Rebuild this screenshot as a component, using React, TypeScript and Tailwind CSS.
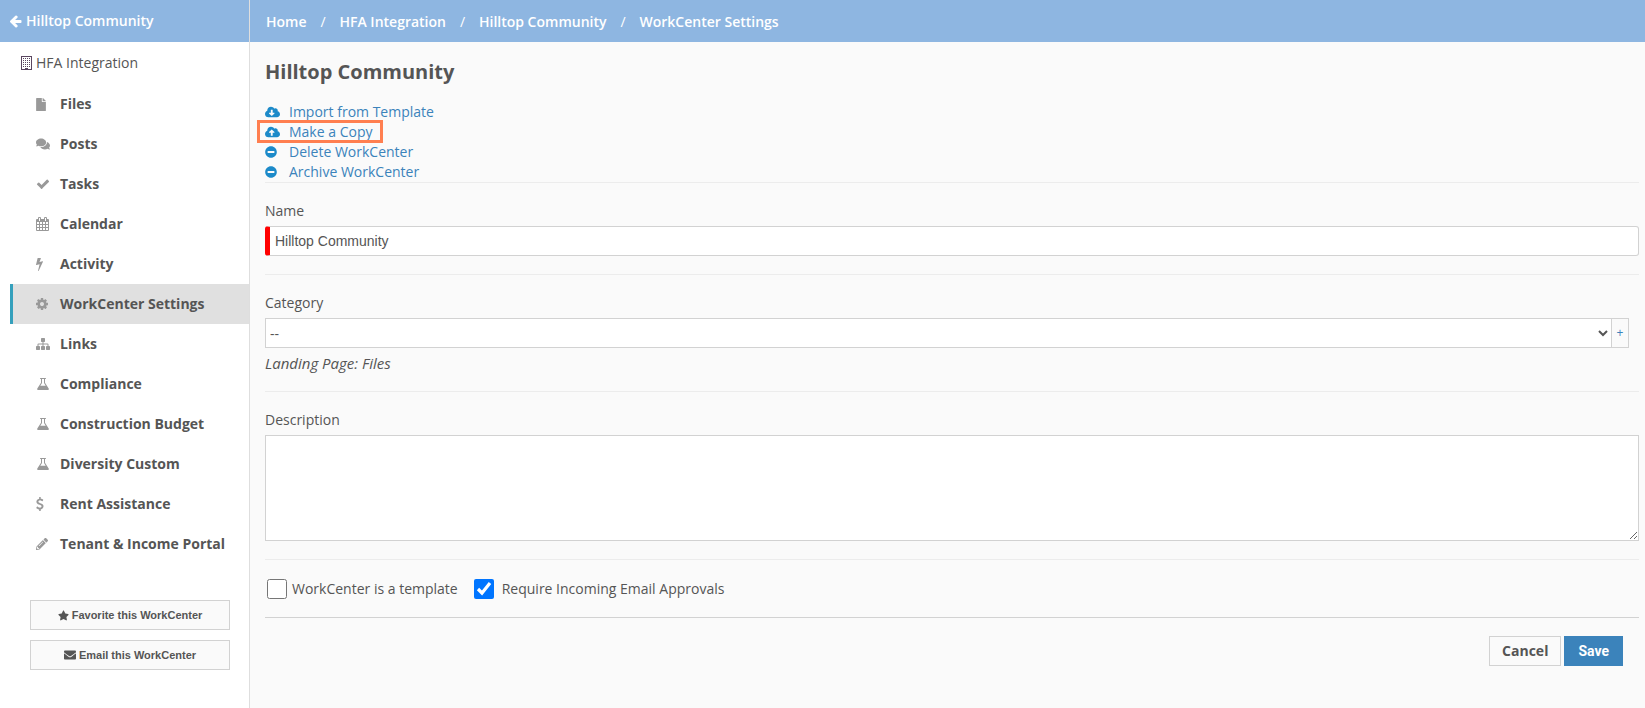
import React, { useState } from 'react';
import {
    FaCloudDownloadAlt,
    FaCloudUploadAlt,
    FaComments,
    FaEnvelope,
    FaFile,
    FaMinusCircle,
    FaPencilAlt,
    FaStar,
} from 'react-icons/fa';

type IconProps = { className?: string };

const BuildingIcon: React.FC<IconProps> = ({ className }) => (
    <svg viewBox="0 0 11 14" className={className} fill="currentColor" aria-hidden="true">
        <path fillRule="evenodd" d="M0 0h11v14H0zM1 1v12h3v-1h3v1h3V1z" />
        <path d="M2 2h1v1H2zM4 2h1v1H4zM6 2h1v1H6zM8 2h1v1H8zM2 4h1v1H2zM4 4h1v1H4zM6 4h1v1H6zM8 4h1v1H8zM2 6h1v1H2zM4 6h1v1H4zM6 6h1v1H6zM8 6h1v1H8zM2 8h1v1H2zM4 8h1v1H4zM6 8h1v1H6zM8 8h1v1H8zM2 10h1v1H2zM4 10h1v1H4zM6 10h1v1H6zM8 10h1v1H8z" />
    </svg>
);

const CalendarIcon: React.FC<IconProps> = ({ className }) => (
    <svg viewBox="0 0 13 14" className={className} fill="currentColor" aria-hidden="true">
        <path
            fillRule="evenodd"
            d="M1 2h1V1q0-1 1-1h1q1 0 1 1v1h3V1q0-1 1-1h1q1 0 1 1v1h1q1 0 1 1v10q0 1-1 1H1q-1 0-1-1V3q0-1 1-1zM3 1v3h1V1zM9 1v3h1V1zM1 5v2h2V5zM4 5v2h2V5zM7 5v2h2V5zM10 5v2h2V5zM1 8v2h2V8zM4 8v2h2V8zM7 8v2h2V8zM10 8v2h2V8zM1 11v2h2v-2zM4 11v2h2v-2zM7 11v2h2v-2zM10 11v2h2v-2z"
        />
    </svg>
);

const FlaskIcon: React.FC<IconProps> = ({ className }) => (
    <svg viewBox="0 0 12 12" className={className} fill="currentColor" aria-hidden="true">
        <path
            fillRule="evenodd"
            d="M3 .5Q3 0 3.500 0h5Q9 0 9 .5T8.500 1H8v3.700l3.700 5.800Q12.300 12 10.900 12H1.100Q-.3 12 .3 10.500L4 4.700V1h-.5Q3 1 3 .5zM5 1v4L3.300 7.700h5.400L7 5V1z"
        />
    </svg>
);

const BoltIcon: React.FC<IconProps> = ({ className }) => (
    <svg viewBox="448 123 896 1669" className={className} fill="currentColor" aria-hidden="true">
        <path d="M1333 566q18 20 7 44l-540 1157q-13 25-42 25-4 0-14-2-17-5-25.5-19t-4.5-30l197-808-406 101q-4 1-12 1-18 0-31-11-18-15-13-39l201-825q4-16 18-26t32-10h328q19 0 32 12.5t13 29.5q0 8-5 18l-171 463 396-98q8-2 12-2 19 0 34 15z" />
    </svg>
);

const ArrowLeftIcon: React.FC<IconProps> = ({ className }) => (
    <svg viewBox="192 128 1536 1664" className={className} fill="currentColor" aria-hidden="true">
        <path d="M1664 896v128q0 53-32.5 90.5t-84.5 37.5h-704l293 294q38 36 38 90t-38 90l-75 76q-37 37-90 37-52 0-91-37l-651-652q-37-37-37-90 0-52 37-91l651-650q38-38 91-38 52 0 90 38l75 74q38 38 38 91t-38 91l-293 293h704q52 0 84.500 37.500t32.500 90.500z" />
    </svg>
);

const CheckIcon: React.FC<IconProps> = ({ className }) => (
    <svg viewBox="0 0 1792 1792" className={className} fill="currentColor" aria-hidden="true">
        <path d="M1671 566q0 40-28 68l-724 724-136 136q-28 28-68 28t-68-28l-136-136-362-362q-28-28-28-68t28-68l136-136q28-28 68-28t68 28l294 295 656-657q28-28 68-28t68 28l136 136q28 28 28 68z" />
    </svg>
);

const CogIcon: React.FC<IconProps> = ({ className }) => (
    <svg viewBox="128 128 1536 1536" className={className} fill="currentColor" aria-hidden="true">
        <path d="M1152 896q0-106-75-181t-181-75-181 75-75 181 75 181 181 75 181-75 75-181zm512-109v222q0 12-8 23t-20 13l-185 28q-19 54-39 91 35 50 107 138 10 12 10 25t-9 23q-27 37-99 108t-94 71q-12 0-26-9l-138-108q-44 23-91 38-16 136-29 186-7 28-36 28h-222q-14 0-24.500-8.500t-11.500-21.500l-28-184q-49-16-90-37l-141 107q-10 9-25 9-14 0-25-11-126-114-165-168-7-10-7-23 0-12 8-23 15-21 51-66.500t54-70.500q-27-50-41-99l-183-27q-13-2-21-12.500t-8-23.500v-222q0-12 8-23t19-13l186-28q14-46 39-92-40-57-107-138-10-12-10-24 0-10 9-23 26-36 98.500-107.500t94.500-71.500q13 0 26 10l138 107q44-23 91-38 16-136 29-186 7-28 36-28h222q14 0 24.500 8.500t11.500 21.500l28 184q49 16 90 37l142-107q9-9 24-9 13 0 25 10 129 119 165 170 7 8 7 22 0 12-8 23-15 21-51 66.500t-54 70.500q26 50 41 98l183 28q13 2 21 12.500t8 23.500z" />
    </svg>
);

const SitemapIcon: React.FC<IconProps> = ({ className }) => (
    <svg viewBox="0 128 1792 1536" className={className} fill="currentColor" aria-hidden="true">
        <path d="M1792 1248v320q0 40-28 68t-68 28h-320q-40 0-68-28t-28-68v-320q0-40 28-68t68-28h96v-192h-512v192h96q40 0 68 28t28 68v320q0 40-28 68t-68 28h-320q-40 0-68-28t-28-68v-320q0-40 28-68t68-28h96v-192h-512v192h96q40 0 68 28t28 68v320q0 40-28 68t-68 28h-320q-40 0-68-28t-28-68v-320q0-40 28-68t68-28h96v-192q0-52 38-90t90-38h512v-192h-96q-40 0-68-28t-28-68v-320q0-40 28-68t68-28h320q40 0 68 28t28 68v320q0 40-28 68t-68 28h-96v192h512q52 0 90 38t38 90v192h96q40 0 68 28t28 68z" />
    </svg>
);

const DollarIcon: React.FC<IconProps> = ({ className }) => (
    <svg viewBox="400 0 1024 1792" className={className} fill="currentColor" aria-hidden="true">
        <path d="M1362 1185q0 153-99.500 263.500t-258.500 136.500v175q0 14-9 23t-23 9h-135q-13 0-22.500-9.500t-9.500-22.500v-175q-66-9-127.500-31t-101.500-44.500-74-48-46.500-37.500-17.500-18q-17-21-2-41l103-135q7-10 23-12 15-2 24 9l2 2q113 99 243 125 37 8 74 8 81 0 142.500-43t61.500-122q0-28-15-53t-33.500-42-58.500-37.500-66-32-80-32.500q-39-16-61.500-25t-61.500-26.500-62.500-31-56.500-35.500-53.500-42.500-43.500-49-35.500-58-21-66.500-8.500-78q0-138 98-242t255-134v-180q0-13 9.500-22.500t22.500-9.500h135q14 0 23 9t9 23v176q57 6 110.500 23t87 33.500 63.500 37.500 39 29 15 14q17 18 5 38l-81 146q-8 15-23 16-14 3-27-7-3-3-14.500-12t-39-26.500-58.500-32-74.500-26-85.500-11.500q-95 0-155 43t-60 111q0 26 8.500 48t29.500 41.500 39.500 33 56 31 60.500 27 70 27.500q53 20 81 31.500t76 35 75.500 42.500 62 50 53 63.500 31.500 76.500 13 94z" />
    </svg>
);

const NAV_ITEMS = [
    { label: 'Files', icon: <FaFile className="w-[10px] h-[13px]" /> },
    { label: 'Posts', icon: <FaComments className="size-[14px]" /> },
    { label: 'Tasks', icon: <CheckIcon className="size-[14px]" /> },
    { label: 'Calendar', icon: <CalendarIcon className="w-[13px] h-[14px]" /> },
    { label: 'Activity', icon: <BoltIcon className="w-[7px] h-[13px]" /> },
    { label: 'WorkCenter Settings', icon: <CogIcon className="size-3" />, active: true },
    { label: 'Links', icon: <SitemapIcon className="w-[14px] h-3" /> },
    { label: 'Compliance', icon: <FlaskIcon className="size-3 ml-px" /> },
    { label: 'Construction Budget', icon: <FlaskIcon className="size-3 ml-px" /> },
    { label: 'Diversity Custom', icon: <FlaskIcon className="size-3 ml-px" /> },
    { label: 'Rent Assistance', icon: <DollarIcon className="w-2 h-[14px]" /> },
    { label: 'Tenant & Income Portal', icon: <FaPencilAlt className="size-3" /> },
];

const CRUMBS = ['Home', 'HFA Integration', 'Hilltop Community', 'WorkCenter Settings'];

const ACTIONS = [
    { label: 'Import from Template', icon: <FaCloudDownloadAlt className="w-[15px] h-[14px]" /> },
    { label: 'Make a Copy', icon: <FaCloudUploadAlt className="w-[15px] h-[14px]" />, highlighted: true },
    { label: 'Delete WorkCenter', icon: <FaMinusCircle className="size-3" /> },
    { label: 'Archive WorkCenter', icon: <FaMinusCircle className="size-3" /> },
];

const Sidebar: React.FC = () => (
    <aside className="w-[250px] shrink-0 bg-white border-r border-[#dedede]">
        <a href="#" className="flex items-center h-[42px] pl-[10px] gap-1 bg-[#8eb6e1] text-white font-semibold">
            <ArrowLeftIcon className="w-3 h-[13px]" />
            Hilltop Community
        </a>
        <a href="#" className="flex items-center h-[42px] pl-[21px] gap-1">
            <BuildingIcon className="w-[11px] h-[14px] text-[#5a4660]" />
            HFA Integration
        </a>
        <nav>
            {NAV_ITEMS.map((item) => (
                <a
                    key={item.label}
                    href="#"
                    className={`flex items-center h-10 ml-[10px] pl-[23px] border-l-3 font-bold ${
                        item.active ? 'bg-[#e0e0e0] border-[#35a0bc]' : 'border-transparent'
                    }`}
                >
                    <span className="w-6 shrink-0 text-[#999]">{item.icon}</span>
                    {item.label}
                </a>
            ))}
        </nav>
        <div className="flex flex-col gap-[10px] mt-9 pl-[30px] pr-[19px] font-['Liberation_Sans',Arial,sans-serif] text-[11px] font-bold">
            <button className="flex items-center justify-center gap-[3px] h-[30px] bg-[#fafafa] border border-[#d2d2d2]">
                <FaStar className="size-[11px]" />
                Favorite this WorkCenter
            </button>
            <button className="flex items-center justify-center gap-[3px] h-[30px] bg-[#fafafa] border border-[#d2d2d2]">
                <FaEnvelope className="size-[12px]" />
                Email this WorkCenter
            </button>
        </div>
    </aside>
);

const SettingsForm: React.FC = () => {
    const [name, setName] = useState('Hilltop Community');
    const [description, setDescription] = useState('');
    const [isTemplate, setIsTemplate] = useState(false);
    const [requireApprovals, setRequireApprovals] = useState(true);

    return (
        <form onSubmit={(e) => e.preventDefault()}>
            <div className="py-[18px] border-b border-[#ececec]">
                <label htmlFor="name" className="block h-[25px]">Name</label>
                <input
                    id="name"
                    type="text"
                    value={name}
                    onChange={(e) => setName(e.target.value)}
                    className="block w-full h-[30px] pl-[5px] bg-white border border-l-5 border-[#d2d2d2] border-l-[#ff0000] rounded-[3px] font-['Liberation_Sans',Arial,sans-serif]"
                />
            </div>

            <div className="py-[18px] border-b border-[#ececec]">
                <label htmlFor="category" className="block h-[25px]">Category</label>
                <div className="flex mr-[10px]">
                    <select id="category" className="grow h-[30px] bg-white border border-[#d2d2d2]">
                        <option>--</option>
                    </select>
                    <button type="button" className="w-[17px] h-[30px] border border-l-0 border-[#d2d2d2] text-[12px] text-[#3b83bb]">
                        +
                    </button>
                </div>
                <p className="pt-[5px] text-[15px] italic">Landing Page: Files</p>
            </div>

            <div className="py-[18px] border-b border-[#ececec]">
                <label htmlFor="description" className="block h-[25px]">Description</label>
                <textarea
                    id="description"
                    value={description}
                    onChange={(e) => setDescription(e.target.value)}
                    className="block w-full h-[106px] bg-white border border-[#d2d2d2]"
                />
            </div>

            <div className="flex items-center h-[58px] border-b border-[#d2d2d2]">
                <label className="flex items-center gap-[5px] pl-[2px]">
                    <input
                        type="checkbox"
                        className="size-5"
                        checked={isTemplate}
                        onChange={(e) => setIsTemplate(e.target.checked)}
                    />
                    WorkCenter is a template
                </label>
                <label className="flex items-center gap-2 pl-4">
                    <input
                        type="checkbox"
                        className="size-5"
                        checked={requireApprovals}
                        onChange={(e) => setRequireApprovals(e.target.checked)}
                    />
                    Require Incoming Email Approvals
                </label>
            </div>

            <div className="flex justify-end gap-[3px] pt-[18px] pr-4">
                <button type="button" className="h-[30px] px-3 border border-[#d2d2d2] font-bold">
                    Cancel
                </button>
                <button type="submit" className="h-[30px] px-[14px] bg-[#3b83bb] text-white font-[Roboto,sans-serif] font-bold">
                    Save
                </button>
            </div>
        </form>
    );
};

export default function App() {
    return (
        <div className="flex min-h-screen font-['Open_Sans',sans-serif] text-[14px] leading-5 text-[#555]">
            <Sidebar />
            <div className="grow min-w-0 bg-[#fafafa]">
                <header className="flex items-center h-[42px] pl-4 pt-[2px] bg-[#8eb6e1] text-white font-semibold">
                    {CRUMBS.map((crumb, i) => (
                        <React.Fragment key={crumb}>
                            {i > 0 && <span className="w-[33px] text-center font-normal">/</span>}
                            <a href="#">{crumb}</a>
                        </React.Fragment>
                    ))}
                </header>
                <main className="pl-[15px] pr-[6px]">
                    <h1 className="pt-[18px] text-[20px] leading-6 font-bold">Hilltop Community</h1>
                    <ul className="pt-[18px] border-b border-[#ececec]">
                        {ACTIONS.map((action) => (
                            <li key={action.label} className="flex h-5">
                                <a href="#" className="relative flex items-center text-[#3b83bb]">
                                    <span className="w-6 text-[#1c8ac9]">{action.icon}</span>
                                    {action.label}
                                    {action.highlighted && (
                                        <span className="absolute -left-2 -right-[11px] -top-[2px] h-[23px] border-3 border-[#ff7f50]" />
                                    )}
                                </a>
                            </li>
                        ))}
                    </ul>
                    <SettingsForm />
                </main>
            </div>
        </div>
    );
}
